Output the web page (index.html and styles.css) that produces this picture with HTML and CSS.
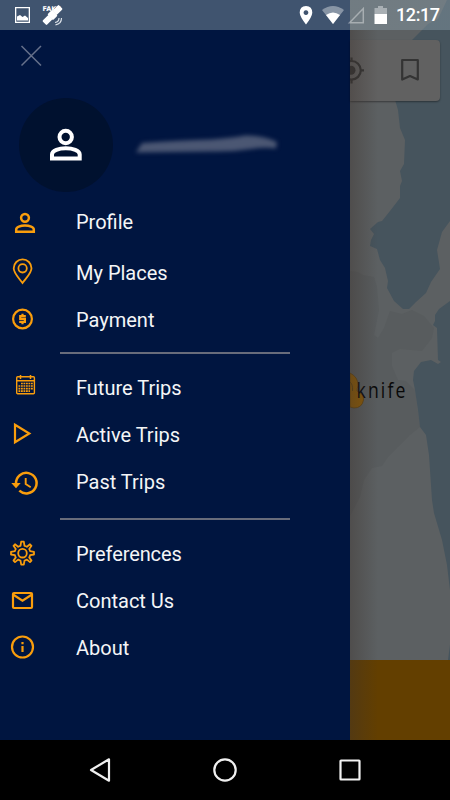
FILE: index.html
```html
<!DOCTYPE html>
<html lang="en">
<head>
<meta charset="utf-8">
<title>Navigation drawer</title>
<link rel="stylesheet" href="styles.css">
</head>
<body>
<div class="screen">
  <svg class="map" width="100" height="660" viewBox="350 0 100 660">
    <rect x="350" width="100" height="660" fill="#5c6062"/>
    <path fill="#585c5e" d="M350 271L358 272L363 275L374 277L377 287L379 310L374 335L378 338L384 328L390 311L402 314L412 310L424 316L434 328L432 338L422 351L400 349L392 353L392 366L398 380L406 381L415 390L420 427L410 435L398 447L388 457L382 466L372 468L364 480L360 497L350 516Z"/>
    <path fill="#46545d" d="M450 0V221L442 232L437 250L440 269L431 282L426 293L416 302L409 309L403 309L394 301L387 288L388 281L385 268L380 260L377 249L370 246L371 240L374 234L370 229L378 222L382 221L390 211L400 198V186L402 181L400 171L404 164L405 140L400 128L398 110L393 93L412 40L428 24L438 19L447 0Z"/>
    <path fill="#46545d" d="M450 301L439 309L435 315V321L433 325L437 328L438 360L441 362L438 364L431 360L421 362L414 371L413 380L415 390L418 410L420 427L426 435L429 455L432 500L434 513L442 540L447 565L450 590ZM450 645L448 660H450Z"/>
  </svg>

  <header class="status">
    <div class="status-left">
      <svg width="70" height="30" viewBox="0 0 70 30">
        <path fill="#fff" fill-rule="evenodd" d="M15 7H30V23H15ZM16.300 8.300V21.700H28.700V8.300ZM17 20.500V16.500L20 15L22.500 17L25 15.500L28 18V20.500Z"/>
        <text class="fake" x="42.500" y="10.800">FAKE</text>
        <g fill="#fff" transform="rotate(-45 52.500 15)"><rect x="41" y="12" width="8.500" height="6" rx="1"/><rect x="49" y="11" width="7" height="8" rx="1.500"/><rect x="55.500" y="12" width="8.500" height="6" rx="1"/></g>
        <path d="M55 22.500Q59 22 59 18M55.500 24.800Q61.500 24 61.500 18" fill="none" stroke="#dce2e8" stroke-width="1.200"/>
      </svg>
    </div>
    <div class="status-right">
      <svg width="94" height="30" viewBox="298 0 94 30">
        <path fill="#fff" fill-rule="evenodd" d="M306 6Q299.700 6.300 299.700 12.800Q300 17 306 24.500Q312 17 312.300 12.800Q312.300 6.300 306 6ZM306 10.200A2.400 2.400 0 1 1 305.900 10.200Z"/>
        <path fill="#fff" fill-opacity=".38" d="M322 10Q333 2 344 10L333 24Z"/>
        <path fill="#fff" d="M326 15Q333 10 340 15L333 24Z"/>
        <path fill="none" stroke="#fff" stroke-opacity=".38" stroke-width="1.500" d="M349.500 22.700H363.300V8.500Z"/>
        <path fill="#fff" fill-opacity=".4" d="M374.500 8H378V6H383V8H387V14H374.500Z"/>
        <path fill="#fff" d="M374.500 14H387V24H374.500Z"/>
      </svg>
      <span class="clock">12:17</span>
    </div>
  </header>

  <main class="content">
    <nav class="drawer">
      <div class="close">
        <svg width="24" height="24" viewBox="19 43 24 24"><path d="M21.500 46L41 65.500M41 46L21.500 65.500" stroke="#66718b" stroke-width="1.500"/></svg>
      </div>
      <div class="account">
        <div class="avatar">
          <svg width="34" height="34" viewBox="49 129 34 34" fill="none" stroke="#fff" stroke-width="4"><circle cx="65.700" cy="138" r="6.200"/><path d="M52 159.600V155.500C52 151.500 59 149.300 65.800 149.300S79.700 151.500 79.700 155.500V159.600Z"/></svg>
        </div>
        <svg class="smudge" width="150" height="30" viewBox="132 129 150 30"><path fill="#4b5773" d="M135 151.500L141 142Q180 139 210 138.500Q235 136.500 244 134.500Q262 134 276 141L275 147.500Q264 146 250 148Q230 151 210 150.500Z"/></svg>
      </div>

      <ul class="menu first">
        <li class="item profile"><svg viewBox="0 198 60 47" fill="none" stroke="#f99d0c" stroke-width="2.500"><circle cx="25" cy="217.800" r="3.900"/><path d="M16.200 231.800V229.500C16.200 227 20.500 225.500 25 225.500S33.800 227 33.800 229.500V231.800Z"/></svg><span>Profile</span></li>
        <li class="item"><svg viewBox="0 249 60 47" fill="none" stroke="#f99d0c" stroke-width="1.800"><path d="M22.500 283C18 277 13.700 273 13.700 268.300A8.900 8.900 0 0 1 31.500 268.300C31.500 273 27 277 22.500 283Z"/><circle cx="22.600" cy="268.300" r="4.200"/></svg><span>My Places</span></li>
        <li class="item"><svg viewBox="0 296 60 47" fill="none" stroke="#f99d0c" stroke-width="2.200"><circle cx="22.500" cy="319" r="9.400"/><path d="M25.800 316.100H20.200V318.900H24.900V321.900H19.200M22.500 313.800V316M22.500 322V324.200"/></svg><span>Payment</span></li>
      </ul>
      <ul class="menu">
        <li class="item"><svg viewBox="0 364 60 47" fill="none" stroke="#f99d0c"><rect x="16.700" y="376.700" width="17.700" height="17" rx="1" stroke-width="1.400"/><path stroke-width="1.500" d="M17 380.800H34M20.500 375V379M30.500 375V379"/><path stroke-width="1.600" stroke-dasharray="1.800 .7" d="M21 383.500H33.500M18.500 386H33.500M18.500 388.600H33.500M18.500 391.100H30"/></svg><span>Future Trips</span></li>
        <li class="item"><svg viewBox="0 411 60 47" fill="none" stroke="#f99d0c" stroke-width="2.200"><path d="M15 424.800V442.200L29.300 433.500Z"/></svg><span>Active Trips</span></li>
        <li class="item"><svg viewBox="0 458 60 47" fill="none" stroke="#f99d0c" stroke-width="2.500"><path d="M16 483.500A10.300 10.300 0 1 1 19.300 490.700"/><path stroke-width="1.900" d="M25.700 478V484L30.700 487.200"/><path fill="#f99d0c" stroke="none" d="M11.300 483H20.700L16 488.200Z"/></svg><span>Past Trips</span></li>
      </ul>
      <ul class="menu">
        <li class="item"><svg viewBox="0 530 60 47" fill="none" stroke="#f99d0c" stroke-width="1.800" stroke-linejoin="round"><circle cx="22.500" cy="553.200" r="4.300"/><path d="M20.500 545.800L21.200 541.700H23.800L24.500 545.800Q25.800 546 26.900 546.800L30 544.300L31.500 545.800L29.200 549Q29.900 550 30.100 551.200L34 551.900V554.500L30.100 555.200Q29.900 556.400 29.200 557.400L31.500 560.600L30 562.100L26.900 559.600Q25.800 560.400 24.500 560.600L23.800 564.700H21.200L20.500 560.600Q19.200 560.400 18.100 559.600L15 562.100L13.500 560.600L15.800 557.400Q15.100 556.400 14.900 555.200L11 554.500V551.900L14.900 551.200Q15.100 550 15.800 549L13.500 545.800L15 544.300L18.100 546.800Q19.200 546 20.500 545.800Z"/></svg><span class="tight">Preferences</span></li>
        <li class="item"><svg viewBox="0 577 60 47" fill="none" stroke="#f99d0c" stroke-width="2.200"><rect x="13" y="593" width="19" height="15" rx="1"/><path d="M13 594.500L22.500 600.700L32 594.500"/></svg><span>Contact Us</span></li>
        <li class="item"><svg viewBox="0 624 60 47" fill="none" stroke="#f99d0c" stroke-width="2.200"><circle cx="22.500" cy="647" r="10.500"/><path d="M22.500 646V652M22.500 642V644.200"/></svg><span>About</span></li>
      </ul>
    </nav>

    <section class="behind">
      <div class="toolbar">
        <svg width="91" height="61" viewBox="350 40 91 61">
          <g fill="none" stroke="#343434" stroke-width="2.200"><circle cx="351.500" cy="70.300" r="9.300"/><path d="M361 70.300H364M351.500 57.500V61M351.500 80V83.500"/></g>
          <circle cx="351" cy="70.300" r="4.500" fill="#343434"/>
          <path d="M402.200 60H417.800V79.500L410 76L402.200 79.500Z" fill="none" stroke="#343434" stroke-width="2.200" stroke-linejoin="round"/>
        </svg>
      </div>
      <div class="place">
        <svg width="60" height="42" viewBox="350 370 60 42"><path d="M350 373Q358 377 358 385Q357 389 357 391Q364 394 363.500 400Q362 408 354 408L350 407Z" fill="#8a5a08" stroke="#60430f" stroke-width=".8"/><path d="M350 382Q353 384 352.500 391" fill="none" stroke="#60430f"/><text class="town" transform="translate(356.500 397.500) scale(.82 1)">knife</text></svg>
      </div>
      <div class="action"></div>
    </section>
  </main>

  <footer class="navbar">
    <svg width="30" height="30" viewBox="85 755 30 30"><path d="M109 759.300V780.700L91 770Z"/></svg>
    <svg width="30" height="30" viewBox="210 755 30 30"><circle cx="225" cy="770" r="10.700"/></svg>
    <svg width="30" height="30" viewBox="335 755 30 30"><rect x="340.500" y="760.500" width="19" height="19" rx=".5"/></svg>
  </footer>
</div>
</body>
</html>
```
FILE: styles.css
```css
* { box-sizing: border-box; }
body { margin: 0; font-family: Roboto, "Liberation Sans", sans-serif; background: #000; }
svg { display: block; }

.screen {
  position: relative;
  display: grid;
  grid-template-rows: 30px 710px 60px;
  width: 450px;
  height: 800px;
  overflow: hidden;
}
.map { position: absolute; top: 0; right: 0; }

.status {
  position: relative;
  display: flex;
  justify-content: space-between;
  background: linear-gradient(90deg, #40546f 350px, rgba(142, 162, 174, .42) 350px);
}
.status-right { display: flex; align-items: center; padding-right: 10px; gap: 4px; }
.clock { color: #fff; font-size: 18px; font-weight: 500; line-height: 32px; width: 44px; letter-spacing: -.4px; }
.fake { font: bold 6.5px "DejaVu Sans", sans-serif; fill: #fff; }

.content { position: relative; display: grid; grid-template-columns: 350px 100px; }
.drawer { background: #001540; }
.close { height: 68px; padding: 13px 0 0 19px; }
.account { display: flex; align-items: center; gap: 20px; height: 94px; padding-left: 19px; }
.avatar {
  display: flex;
  align-items: center;
  justify-content: center;
  width: 94px;
  height: 94px;
  border-radius: 50%;
  background: #00112f;
}
.smudge { overflow: visible; filter: blur(2.2px); }

.menu { margin: 0; padding: 0; list-style: none; }
.menu.first { padding-top: 6px; }
.menu + .menu { padding-top: 25px; }
.menu + .menu::before {
  content: "";
  display: block;
  width: 230px;
  height: 2px;
  margin: -16px 0 10px 60px;
  background: #686c7b;
}
.menu:last-child { padding-top: 29px; }
.item { display: flex; align-items: center; height: 47px; color: #f4f5f7; font-size: 20px; }
.item.profile { margin-bottom: 4px; }
.item svg { width: 60px; height: 47px; margin-right: 16px; }
.tight { letter-spacing: -.1px; }

.behind {
  display: flex;
  flex-direction: column;
  position: relative;
}
.behind::after {
  content: "";
  position: absolute;
  inset: 0;
  background: linear-gradient(90deg, rgba(60, 50, 45, .4), rgba(60, 50, 45, 0) 28px);
}
.toolbar {
  width: 90px;
  height: 61px;
  margin-top: 10px;
  overflow: hidden;
  border-radius: 0 4px 4px 0;
  background: #616161;
  box-shadow: 0 1px 2px rgba(0, 0, 0, .4);
}
.place { margin-top: 269px; }
.town { font: 21.5px "Open Sans", sans-serif; letter-spacing: 2.6px; fill: #080808; }
.action { height: 80px; margin-top: auto; background: #633f00; }

.navbar { display: flex; align-items: center; justify-content: space-between; padding: 0 85px; background: #000; }
.navbar svg { fill: none; stroke: #f0f0f0; stroke-width: 2.2; stroke-linejoin: round; }
```
